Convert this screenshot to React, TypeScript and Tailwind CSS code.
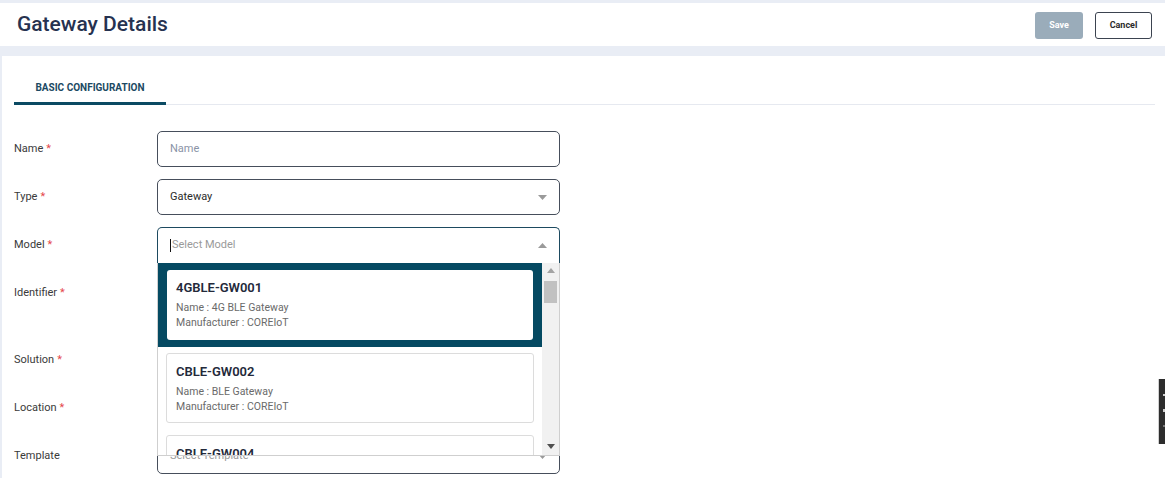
import React from "react";

const font = { fontFamily: "Roboto, 'Noto Sans', sans-serif" };

function Label({ text, required = true }: { text: string; required?: boolean }) {
  return (
    <div className="w-[143px] shrink-0 pt-[10px] text-[11px] leading-4 text-[#3a3a3a]">
      {text}
      {required && <span className="ml-[3px] text-[#e5484d]">*</span>}
    </div>
  );
}

function Caret({ up = false }: { up?: boolean }) {
  return (
    <svg width="9" height="5" viewBox="0 0 9 5" className="shrink-0">
      {up ? <path d="M0 5 L4.5 0 L9 5 Z" fill="#9a9a9a" /> : <path d="M0 0 L4.5 5 L9 0 Z" fill="#9a9a9a" />}
    </svg>
  );
}

function ModelCard({ code, name, selected }: { code: string; name: string; selected?: boolean }) {
  return (
    <div className={selected ? "bg-[#054a62] px-[9px] py-[7px]" : "bg-white px-[8px] py-[6px]"}>
      <div
        className={
          "h-[70px] rounded-[3px] bg-white px-[9px] pt-[10px] " +
          (selected ? "" : "border border-[#dcdcdc]")
        }
      >
        <div className="text-[13px] font-semibold leading-4 text-[#23293a]">{code}</div>
        <div className="mt-[4px] text-[10.5px] leading-[15px] text-[#6a6a6a]">Name : {name}</div>
        <div className="text-[10.5px] leading-[15px] text-[#6a6a6a]">Manufacturer : COREIoT</div>
      </div>
    </div>
  );
}

export default function App() {
  return (
    <div style={font} className="relative h-[478px] w-[1165px] overflow-hidden bg-[#e9edf5]">
      <div className="h-[3px]" />
      {/* Header */}
      <div className="flex h-[43px] items-start justify-between bg-white pl-[17px] pr-[13px]">
        <h1 className="pt-[7px] text-[21px] font-medium leading-7 text-[#263250]">Gateway Details</h1>
        <div className="flex gap-3 pt-[9px]">
          <button className="h-[27px] w-[48px] rounded-[3px] bg-[#9aacba] text-[9px] font-bold text-white">
            Save
          </button>
          <button className="h-[27px] w-[57px] rounded-[3px] border border-[#3b4350] bg-white text-[9px] font-bold text-[#2b2b2b]">
            Cancel
          </button>
        </div>
      </div>
      <div className="h-[10px]" />
      {/* Card */}
      <div className="ml-[2px] h-[500px] bg-white pl-[12px] pr-[10px]">
        <div className="flex border-b border-[#e6e9f0]">
          <div className="-mb-px w-[152px] border-b-[3px] border-[#0b4a63] pb-[6px] pt-[24px] text-center text-[10px] font-bold leading-4 text-[#1c4a63]">
            BASIC CONFIGURATION
          </div>
        </div>
        <div className="flex flex-col gap-3 pt-[26px]">
          {/* Name */}
          <div className="flex">
            <Label text="Name" />
            <div className="flex h-[36px] w-[403px] items-center rounded-[5px] border border-[#464e5b] px-3 text-[11px] text-[#8a93a6]">
              Name
            </div>
          </div>
          {/* Type */}
          <div className="flex">
            <Label text="Type" />
            <div className="flex h-[36px] w-[403px] items-center justify-between rounded-[5px] border border-[#464e5b] px-3 text-[11px] text-[#2b2b2b]">
              <span>Gateway</span>
              <Caret />
            </div>
          </div>
          {/* Model */}
          <div className="relative z-10 flex">
            <Label text="Model" />
            <div className="relative w-[403px]">
              <div className="flex h-[36px] items-center justify-between rounded-t-[5px] border border-b-0 border-[#1d4a60] pl-3 pr-3 text-[11px] text-[#9a9a9a]">
                <span className="flex items-center">
                  <span className="mr-[1px] inline-block h-[13px] w-px bg-[#111]" />
                  Select Model
                </span>
                <Caret up />
              </div>
              {/* Dropdown */}
              <div className="absolute left-0 top-[36px] flex h-[193px] w-[403px] overflow-hidden border border-t-0 border-[#cfcfcf] bg-white">
                <div className="flex-1 overflow-hidden">
                  <ModelCard code="4GBLE-GW001" name="4G BLE Gateway" selected />
                  <ModelCard code="CBLE-GW002" name="BLE Gateway" />
                  <ModelCard code="CBLE-GW004" name="BLE Gateway" />
                </div>
                <div className="flex w-[17px] flex-col items-center bg-[#f1f1f1]">
                  <svg width="8" height="5" viewBox="0 0 8 5" className="mt-[5px]">
                    <path d="M0 5 L4 0 L8 5 Z" fill="#a3a3a3" />
                  </svg>
                  <div className="mt-[8px] h-[22px] w-[13px] bg-[#c1c1c1]" />
                  <div className="flex-1" />
                  <svg width="8" height="5" viewBox="0 0 8 5" className="mb-[6px]">
                    <path d="M0 0 L4 5 L8 0 Z" fill="#505050" />
                  </svg>
                </div>
              </div>
            </div>
          </div>
          {/* Identifier */}
          <div className="flex h-[55px]">
            <Label text="Identifier" />
            <div className="h-[36px] w-[403px] rounded-[5px] border border-[#464e5b]" />
          </div>
          {/* Solution */}
          <div className="flex">
            <Label text="Solution" />
            <div className="h-[36px] w-[403px] rounded-[5px] border border-[#464e5b]" />
          </div>
          {/* Location */}
          <div className="flex">
            <Label text="Location" />
            <div className="h-[36px] w-[403px] rounded-[5px] border border-[#464e5b]" />
          </div>
          {/* Template */}
          <div className="flex">
            <Label text="Template" required={false} />
            <div className="flex h-[36px] w-[403px] items-center justify-between rounded-[5px] border border-[#464e5b] px-3 text-[11px] text-[#9a9a9a]">
              <span>Select Template</span>
              <Caret />
            </div>
          </div>
        </div>
      </div>
      {/* Right side feedback tab */}
      <div className="absolute right-0 top-[379px] flex h-[65px] w-[7px] flex-col items-end gap-[13px] border-l border-[#d0d0d0] bg-[#2d2d2d] pt-[15px]">
        <div className="h-[2px] w-[2px] bg-[#cfcfcf]" />
        <div className="h-[3px] w-[2px] bg-[#cfcfcf]" />
        <div className="h-[2px] w-[2px] bg-[#777]" />
      </div>
    </div>
  );
}
